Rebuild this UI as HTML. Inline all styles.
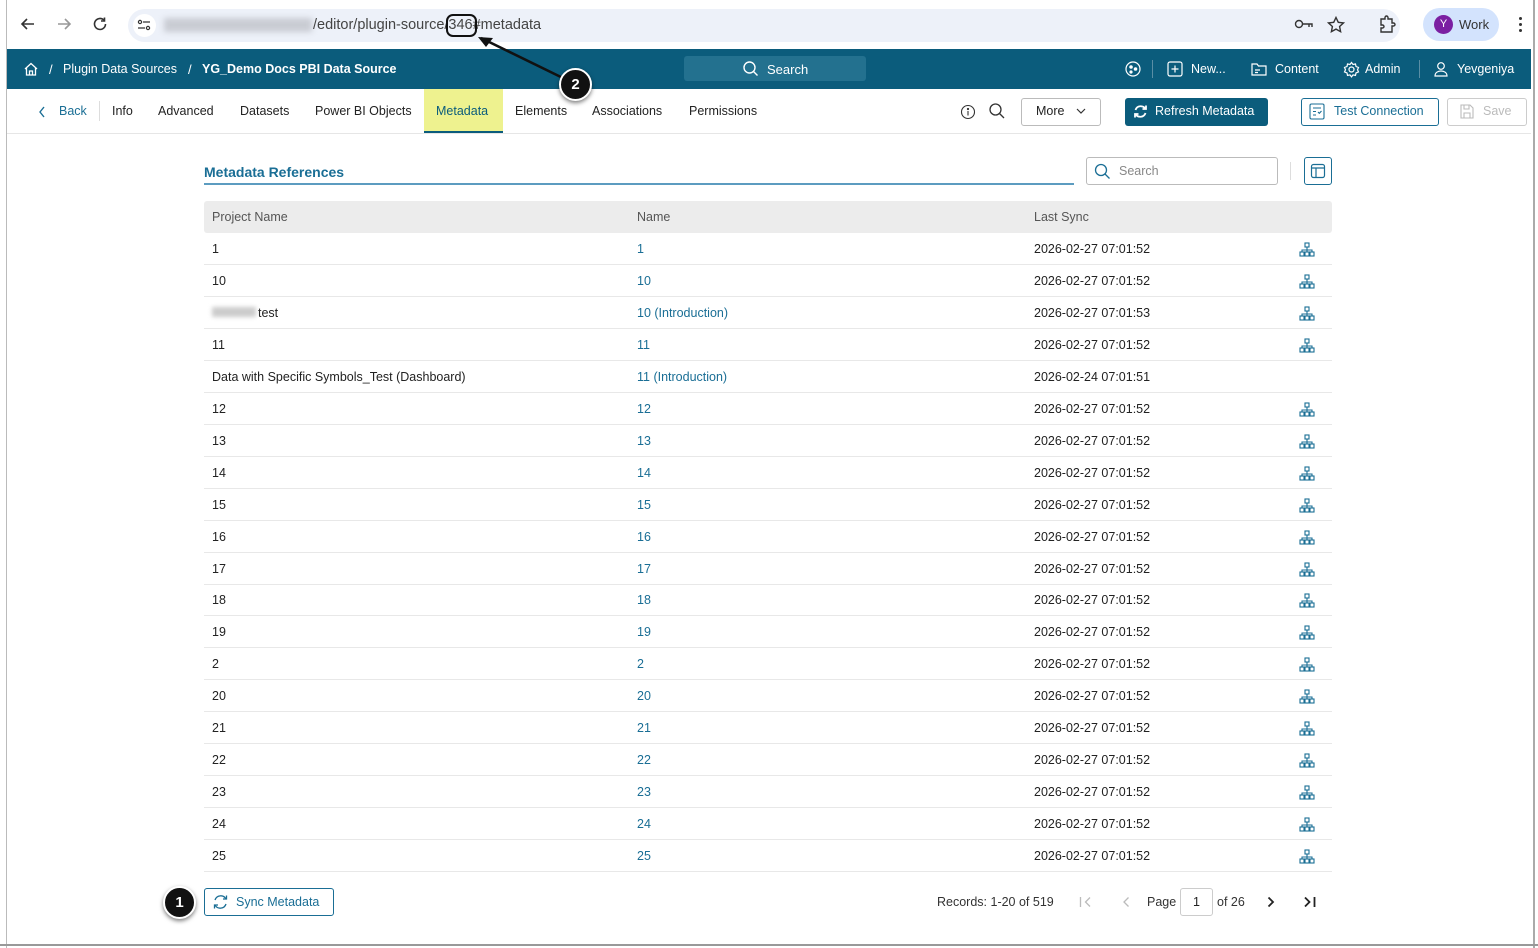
<!DOCTYPE html>
<html><head><meta charset="utf-8"><style>
*{box-sizing:border-box;margin:0;padding:0}
body{width:1538px;height:948px;background:#fff;font-family:"Liberation Sans",Arial,sans-serif;font-size:13px;color:#222;position:relative;overflow:hidden}
.a{position:absolute}
.hdr{left:7px;top:49px;width:1524px;height:40px;background:#0b5c7c;color:#fff}
.t{position:absolute;white-space:nowrap}
.row{position:absolute;left:204px;width:1128px;height:32px;border-bottom:1px solid #e8e8e8}
.row span{position:absolute;top:9px;font-size:12.5px}
.c1{left:8px;color:#222}.c2{left:433px;color:#1a6e95}.c3{left:830px;color:#222}
.ic{position:absolute;left:1095px;top:9px}
</style></head><body>
<div class="a" style="left:6px;top:0;width:1px;height:948px;background:#bbb"></div>
<div class="a" style="left:1533px;top:0;width:2px;height:948px;background:#aaa"></div>
<div class="a" style="left:0;top:944px;width:1538px;height:2px;background:#999"></div>
<div class="a" style="left:7px;top:0;width:1526px;height:49px;background:#fff"></div>
<svg class="a" style="left:20px;top:16px" width="16" height="16" fill="none" stroke="#333" stroke-width="1.6"><path d="M14 8H2M7 3L2 8l5 5"/></svg>
<svg class="a" style="left:56px;top:16px" width="16" height="16" fill="none" stroke="#999" stroke-width="1.6"><path d="M2 8h12M9 3l5 5-5 5"/></svg>
<svg class="a" style="left:92px;top:16px" width="16" height="16" fill="none" stroke="#333" stroke-width="1.6"><path d="M13.5 8a5.5 5.5 0 1 1-1.6-3.9"/><path d="M12.5 1.5v3.5H9" /></svg>
<div class="a" style="left:128px;top:9px;width:1272px;height:33px;border-radius:17px;background:#edf1f9"></div>
<div class="a" style="left:133px;top:14px;width:23px;height:23px;border-radius:12px;background:#fff"></div>
<svg class="a" style="left:137px;top:18px" width="14" height="14" fill="none" stroke="#333" stroke-width="1.2"><circle cx="3" cy="4" r="1.6"/><path d="M6 4h7M1 10h7"/><circle cx="11" cy="10" r="1.6"/></svg>
<div class="a" style="left:164px;top:18px;width:148px;height:14px;background:#c9ccd3;filter:blur(3px)"></div>
<div class="t" style="left:313px;top:17px;font-size:14.5px;color:#444">/editor/plugin-source/346#metadata</div>
<div class="a" style="left:446px;top:14px;width:31px;height:23px;border:2px solid #111;border-radius:7px"></div>
<svg class="a" style="left:475px;top:34px;z-index:6" width="120" height="60"><line x1="6" y1="4" x2="92" y2="46" stroke="#111" stroke-width="2.5"/><polygon points="3,3 18,4 11,13" fill="#111"/></svg>
<div class="a" style="left:559px;top:68px;width:33px;height:33px;border-radius:50%;background:#111;border:2px solid #fff;box-shadow:0 2px 4px rgba(0,0,0,.5);color:#fff;font-weight:bold;font-size:15px;text-align:center;line-height:29px;z-index:7">2</div>
<svg class="a" style="left:1294px;top:18px" width="20" height="12" fill="none" stroke="#333" stroke-width="1.4"><circle cx="5" cy="6" r="3.5"/><path d="M8.5 6H18v3M15 6v3"/></svg>
<svg class="a" style="left:1327px;top:16px" width="18" height="18" fill="none" stroke="#333" stroke-width="1.4"><path d="M9 1.5l2.3 4.8 5.2.6-3.9 3.6 1 5.2L9 13.1l-4.6 2.6 1-5.2L1.5 6.9l5.2-.6z"/></svg>
<svg class="a" style="left:1378px;top:15px" width="18" height="19" fill="none" stroke="#333" stroke-width="1.4"><path d="M3 4h4V2.5a1.5 1.5 0 0 1 3 0V4h4v4h1.5a1.5 1.5 0 0 1 0 3H14v6H3v-4h1.5a1.5 1.5 0 0 0 0-3H3z"/></svg>
<div class="a" style="left:1423px;top:8px;width:76px;height:33px;border-radius:17px;background:#d3e3fd"></div>
<div class="a" style="left:1434px;top:15px;width:19px;height:19px;border-radius:50%;background:#7b1fa2;color:#fff;font-size:11px;text-align:center;line-height:19px">Y</div>
<div class="t" style="left:1459px;top:17px;font-size:13px;color:#333">Work</div>
<div class="a" style="left:1519px;top:17px;width:3px;height:3px;border-radius:50%;background:#333;box-shadow:0 6px 0 #333,0 12px 0 #333"></div>
<div class="a hdr">
 <svg class="a" style="left:16px;top:12px" width="16" height="16" viewBox="0 0 16 16" fill="none" stroke="#fff" stroke-width="1.3"><path d="M2 8L8 2.5 14 8M3.5 6.8V14h9V6.8M6.5 14v-4h3v4"/></svg>
 <div class="t" style="left:42px;top:13px">/</div>
 <div class="t" style="left:56px;top:13px;font-size:12.5px">Plugin Data Sources</div>
 <div class="t" style="left:181px;top:13px">/</div>
 <div class="t" style="left:195px;top:13px;font-weight:bold;font-size:12.5px">YG_Demo Docs PBI Data Source</div>
 <div class="a" style="left:677px;top:7px;width:182px;height:25px;border-radius:3px;background:#23718f"></div>
 <svg class="a" style="left:735px;top:11px" width="18" height="18" fill="none" stroke="#fff" stroke-width="1.4"><circle cx="7.5" cy="7.5" r="5.5"/><path d="M11.5 11.5l4 4"/></svg>
 <div class="t" style="left:760px;top:13px">Search</div>
 <svg class="a" style="left:1118px;top:12px" width="16" height="16" fill="none" stroke="#fff" stroke-width="1.2"><circle cx="8" cy="8" r="7"/><circle cx="6" cy="6" r="1.2" fill="#fff"/><circle cx="10.5" cy="8" r="1.2" fill="#fff"/><circle cx="6" cy="11" r="1" fill="#fff"/></svg>
 <div class="a" style="left:1145px;top:11px;width:1px;height:18px;background:#5a8ea5"></div>
 <svg class="a" style="left:1160px;top:12px" width="16" height="16" fill="none" stroke="#fff" stroke-width="1.2"><rect x="1" y="1" width="14" height="14" rx="2"/><path d="M8 4.5v7M4.5 8h7"/></svg>
 <div class="t" style="left:1184px;top:13px;font-size:12.5px">New...</div>
 <svg class="a" style="left:1244px;top:12px" width="16" height="16" fill="none" stroke="#fff" stroke-width="1.2"><path d="M1 3h5l1.5 2H15v9H1z"/><path d="M4 9h5M4 11.5h3"/></svg>
 <div class="t" style="left:1268px;top:13px;font-size:12.5px">Content</div>
 <svg class="a" style="left:1336px;top:12px" width="17" height="17" fill="none" stroke="#fff" stroke-width="1.2"><circle cx="8.5" cy="8.5" r="2.5"/><path d="M8.5 1.5l1.5 2 2.5-.5.5 2.5 2.5 1-1 2.2 1 2.2-2.5 1-.5 2.5-2.5-.5-1.5 2-1.5-2-2.5.5-.5-2.5-2.5-1 1-2.2-1-2.2 2.5-1 .5-2.5 2.5.5z"/></svg>
 <div class="t" style="left:1358px;top:13px;font-size:12.5px">Admin</div>
 <div class="a" style="left:1412px;top:11px;width:1px;height:18px;background:#5a8ea5"></div>
 <svg class="a" style="left:1426px;top:12px" width="16" height="16" fill="none" stroke="#fff" stroke-width="1.2"><circle cx="8" cy="5" r="3.3"/><path d="M2 15c0-3.5 3-5 6-5s6 1.5 6 5z"/></svg>
 <div class="t" style="left:1450px;top:13px;font-size:12.5px">Yevgeniya</div>
</div>
<div class="a" style="left:7px;top:133px;width:1524px;height:1px;background:#e6e6e6"></div>
<div class="a" style="left:424px;top:89px;width:79px;height:44px;background:#eef28f;border-bottom:2px solid #0b5c7c"></div>
<svg class="a" style="left:38px;top:106px" width="8" height="12" fill="none" stroke="#1a6e95" stroke-width="1.4"><path d="M6 1L2 6l4 5"/></svg>
<div class="t" style="left:59px;top:104px;color:#1a6e95;font-size:12.5px">Back</div>
<div class="a" style="left:99px;top:101px;width:1px;height:20px;background:#ddd"></div>
<div class="t" style="left:112px;top:104px;font-size:12.5px">Info</div>
<div class="t" style="left:158px;top:104px;font-size:12.5px">Advanced</div>
<div class="t" style="left:240px;top:104px;font-size:12.5px">Datasets</div>
<div class="t" style="left:315px;top:104px;font-size:12.5px">Power BI Objects</div>
<div class="t" style="left:436px;top:104px;color:#0b5c7c;font-size:12.5px">Metadata</div>
<div class="t" style="left:515px;top:104px;font-size:12.5px">Elements</div>
<div class="t" style="left:592px;top:104px;font-size:12.5px">Associations</div>
<div class="t" style="left:689px;top:104px;font-size:12.5px">Permissions</div>
<svg class="a" style="left:960px;top:104px" width="16" height="16" fill="none" stroke="#333" stroke-width="1.1"><circle cx="8" cy="8" r="6.5"/><path d="M8 7v4.5"/><circle cx="8" cy="5" r=".6" fill="#333"/></svg>
<svg class="a" style="left:988px;top:102px" width="18" height="18" fill="none" stroke="#333" stroke-width="1.3"><circle cx="7.5" cy="7.5" r="5.5"/><path d="M11.5 11.5l4.5 4.5"/></svg>
<div class="a" style="left:1021px;top:98px;width:80px;height:28px;border:1px solid #bbb;border-radius:3px"></div>
<div class="t" style="left:1036px;top:104px;font-size:12.5px">More</div>
<svg class="a" style="left:1076px;top:107px" width="10" height="8" fill="none" stroke="#333" stroke-width="1.2"><path d="M1 2l4 4 4-4"/></svg>
<div class="a" style="left:1125px;top:98px;width:143px;height:28px;background:#0b5c7c;border-radius:3px"></div>
<svg class="a" style="left:1133px;top:104px" width="15" height="15" fill="none" stroke="#fff" stroke-width="1.8"><path d="M12.5 5A5.5 5.5 0 0 0 2.5 6M2.5 10a5.5 5.5 0 0 0 10-1"/><path d="M13 1.5V5H9.5M2 13.5V10h3.5"/></svg>
<div class="t" style="left:1155px;top:104px;color:#fff;font-size:12.5px">Refresh Metadata</div>
<div class="a" style="left:1301px;top:98px;width:138px;height:28px;border:1px solid #1a6e95;border-radius:3px"></div>
<svg class="a" style="left:1309px;top:103px" width="16" height="17" fill="none" stroke="#1a6e95" stroke-width="1.1"><rect x="1" y="1" width="14" height="15" rx="1.5"/><path d="M4 5h8M4 8.5h3M4 12h3M9 9l1.3 1.3L12.5 8"/></svg>
<div class="t" style="left:1334px;top:104px;color:#1a6e95;font-size:12.5px">Test Connection</div>
<div class="a" style="left:1447px;top:98px;width:80px;height:28px;border:1px solid #ccc;border-radius:3px"></div>
<svg class="a" style="left:1460px;top:104px" width="14" height="15" fill="none" stroke="#bbb" stroke-width="1.1"><path d="M1 1h9l3 3v10H1z"/><path d="M4 1v4h5V1M4 14V9h6v5"/></svg>
<div class="t" style="left:1483px;top:104px;color:#bbb;font-size:12.5px">Save</div>
<div class="t" style="left:204px;top:164px;font-size:14px;font-weight:bold;color:#1a6e95">Metadata References</div>
<div class="a" style="left:204px;top:183px;width:870px;height:2px;background:#5c9cc0"></div>
<div class="a" style="left:1086px;top:157px;width:192px;height:28px;border:1px solid #bbb;border-radius:3px"></div>
<svg class="a" style="left:1094px;top:163px" width="18" height="18" fill="none" stroke="#1a6e95" stroke-width="1.3"><circle cx="7" cy="7" r="5.5"/><path d="M11 11l4.5 4.5"/></svg>
<div class="t" style="left:1119px;top:164px;color:#888;font-size:12.5px">Search</div>
<div class="a" style="left:1290px;top:162px;width:1px;height:18px;background:#ddd"></div>
<div class="a" style="left:1304px;top:157px;width:28px;height:28px;border:1px solid #1a6e95;border-radius:3px"></div>
<svg class="a" style="left:1310px;top:163px" width="16" height="16" fill="none" stroke="#1a6e95" stroke-width="1.2"><rect x="1.5" y="1.5" width="13" height="13" rx="2"/><path d="M1.5 5h13M6 5v9.5"/></svg>
<div class="a" style="left:204px;top:201px;width:1128px;height:32px;background:#ececec;border-radius:3px"></div>
<div class="t" style="left:212px;top:210px;color:#555;font-size:12.5px">Project Name</div>
<div class="t" style="left:637px;top:210px;color:#555;font-size:12.5px">Name</div>
<div class="t" style="left:1034px;top:210px;color:#555;font-size:12.5px">Last Sync</div>
<div id="rows"></div>
<script>
var d=[["1","1","2026-02-27 07:01:52",1],["10","10","2026-02-27 07:01:52",1],["test","10 (Introduction)","2026-02-27 07:01:53",1],["11","11","2026-02-27 07:01:52",1],["Data with Specific Symbols_Test (Dashboard)","11 (Introduction)","2026-02-24 07:01:51",0]];
["12","13","14","15","16","17","18","19","2","20","21","22","23","24","25"].forEach(function(x){d.push([x,x,"2026-02-27 07:01:52",1])});
var ic='<svg class="ic" width="16" height="16" viewBox="0 0 16 16" fill="none" stroke="#1a6e95" stroke-width="1.1"><rect x="6" y="1" width="4" height="4"/><path d="M8 5v3M3 10V8h10v2M8 8v2"/><rect x="1" y="10" width="4" height="4"/><rect x="6" y="10" width="4" height="4"/><rect x="11" y="10" width="4" height="4"/></svg>';
var h="";d.forEach(function(r,i){var t=233+i*31.95;var p=r[0]=="test"?'<i style="display:inline-block;width:44px;height:10px;background:#ccc;filter:blur(2px);margin-right:2px"></i>test':r[0];
h+='<div class="row" style="top:'+t+'px"><span class="c1">'+p+'</span><span class="c2">'+r[1]+'</span><span class="c3">'+r[2]+'</span>'+(r[3]?ic:'')+'</div>';});
document.getElementById("rows").innerHTML=h;
</script>
<div class="a" style="left:204px;top:888px;width:130px;height:28px;border:1px solid #1a6e95;border-radius:3px"></div>
<svg class="a" style="left:212px;top:894px" width="17" height="16" fill="none" stroke="#1a6e95" stroke-width="1.3"><path d="M14 5A6 6 0 0 0 3 6M3 11a6 6 0 0 0 11-1"/><path d="M14.5 1.5V5H11M2.5 14.5V11H6"/></svg>
<div class="t" style="left:236px;top:895px;color:#1a6e95;font-size:12.5px">Sync Metadata</div>
<div class="a" style="left:163px;top:886px;width:33px;height:33px;border-radius:50%;background:#111;border:2px solid #fff;box-shadow:0 2px 4px rgba(0,0,0,.5);color:#fff;font-weight:bold;font-size:15px;text-align:center;line-height:29px">1</div>
<div class="t" style="left:937px;top:895px;color:#333;font-size:12.5px">Records: 1-20 of 519</div>
<svg class="a" style="left:1079px;top:896px" width="14" height="12" fill="none" stroke="#bbb" stroke-width="1.3"><path d="M1.5 1v10M11 1.5L6.5 6l4.5 4.5"/></svg>
<svg class="a" style="left:1121px;top:896px" width="10" height="12" fill="none" stroke="#bbb" stroke-width="1.3"><path d="M7.5 1.5L3 6l4.5 4.5"/></svg>
<div class="t" style="left:1147px;top:895px;color:#333;font-size:12.5px">Page</div>
<div class="a" style="left:1180px;top:888px;width:33px;height:28px;border:1px solid #ccc;border-radius:3px;text-align:center;line-height:26px;font-size:12.5px">1</div>
<div class="t" style="left:1217px;top:895px;color:#333;font-size:12.5px">of 26</div>
<svg class="a" style="left:1266px;top:896px" width="10" height="12" fill="none" stroke="#222" stroke-width="1.8"><path d="M2.5 1.5L7 6l-4.5 4.5"/></svg>
<svg class="a" style="left:1303px;top:896px" width="14" height="12" fill="none" stroke="#222" stroke-width="1.8"><path d="M2 1.5L6.5 6 2 10.5M11.5 1v10"/></svg>
</body></html>
